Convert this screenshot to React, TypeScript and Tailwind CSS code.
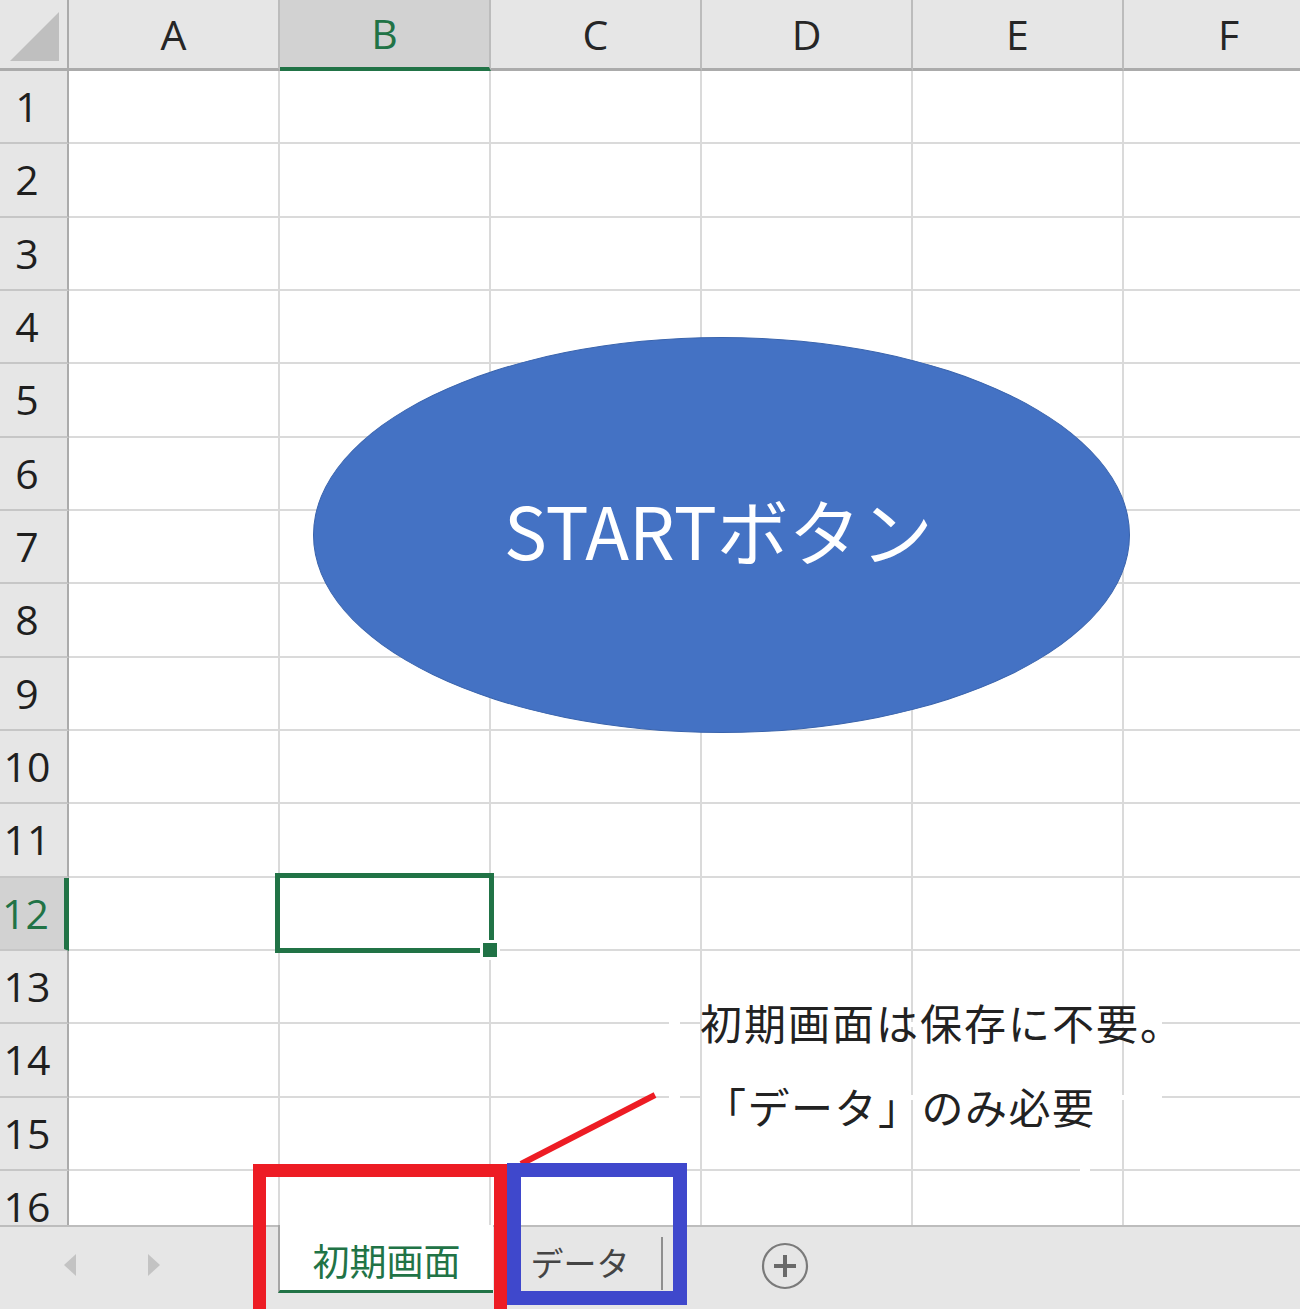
import React from "react";

const COLS = ["A", "B", "C", "D", "E", "F"];
const ROWS = Array.from({ length: 16 }, (_, i) => i + 1);

const SELECTED_COL = "B";
const SELECTED_ROW = 12;

function ColumnHeader({ label }: { label: string }) {
  const active = label === SELECTED_COL;
  return (
    <div
      className={
        active
          ? "w-[211px] shrink-0 flex items-center justify-center bg-[#d2d2d2] border-r-2 border-r-[#bcbcbc] border-b-4 border-b-[#217346] text-[#217346]"
          : "w-[211px] shrink-0 flex items-center justify-center bg-[#e6e6e6] border-r-2 border-r-[#bcbcbc] border-b-[3px] border-b-[#ababab] text-[#262626]"
      }
    >
      <span className="text-[41px] leading-none">{label}</span>
    </div>
  );
}

function SheetRow({ row }: { row: number }) {
  const active = row === SELECTED_ROW;
  return (
    <div className="flex h-[73.33px]">
      <div
        className={
          active
            ? "w-[69px] shrink-0 flex items-center justify-center pr-[13px] bg-[#d2d2d2] border-r-[5px] border-r-[#217346] border-b-2 border-b-[#c6c6c6] text-[#217346]"
            : "w-[69px] shrink-0 flex items-center justify-center pr-[13px] bg-[#e6e6e6] border-r-2 border-r-[#ababab] border-b-2 border-b-[#c6c6c6] text-[#1f1f1f]"
        }
      >
        <span className="text-[41px] leading-none">{row}</span>
      </div>
      {COLS.map((c) => (
        <div key={c} className="w-[211px] shrink-0 bg-white border-r-2 border-b-2 border-[#dadada]" />
      ))}
    </div>
  );
}

function SheetTabs() {
  return (
    <div className="h-[84px] shrink-0 flex bg-[#e6e6e6]">
      {/* scroll arrows */}
      <div className="w-[278px] shrink-0 flex items-start pt-[27px] pl-[64px] gap-[72px] border-t-2 border-[#bdbdbd]">
        <svg width="12" height="22" viewBox="0 0 12 22">
          <path d="M12 0 L0 11 L12 22 Z" fill="#c3c3c3" />
        </svg>
        <svg width="12" height="22" viewBox="0 0 12 22">
          <path d="M0 0 L12 11 L0 22 Z" fill="#c3c3c3" />
        </svg>
      </div>

      {/* active sheet */}
      <div className="w-[215px] h-[68px] shrink-0 flex items-center justify-center pt-[8px] bg-white border-l-2 border-l-[#a6a6a6] border-b-[3px] border-b-[#217346]">
        <span className="text-[37px] leading-none text-[#217346]">初期画面</span>
      </div>

      {/* other sheet */}
      <div className="w-[172px] shrink-0 flex items-start border-t-2 border-[#bdbdbd]">
        <div className="flex-1 h-[70px] flex items-center justify-center pt-[2px] pl-[6px]">
          <span className="text-[33px] leading-none text-[#444444]">データ</span>
        </div>
        <div className="w-[2px] h-[53px] mt-[10px] mr-[2px] bg-[#8e8e8e]" />
      </div>

      {/* new sheet */}
      <div className="flex-1 flex items-start pt-[15px] pl-[96px] border-t-2 border-[#bdbdbd]">
        <svg width="48" height="48" viewBox="0 0 48 48">
          <circle cx="24" cy="24" r="22" fill="none" stroke="#7a7a7a" strokeWidth="2.2" />
          <path d="M24 13 V35 M13 24 H35" stroke="#6a6a6a" strokeWidth="4" />
        </svg>
      </div>
    </div>
  );
}

export default function App() {
  return (
    <div className="relative w-[1300px] h-[1309px] overflow-hidden bg-white font-['Open_Sans','Noto_Sans_CJK_JP',sans-serif]">
      <div className="flex flex-col h-full">
        {/* column headers */}
        <div className="flex h-[71px] shrink-0">
          <div className="w-[69px] shrink-0 relative bg-[#e6e6e6] border-r-2 border-b-[3px] border-[#ababab]">
            <svg className="absolute left-[10px] top-[12px]" width="49" height="49" viewBox="0 0 49 49">
              <path d="M0 49 L49 0 L49 49 Z" fill="#bfbfbf" />
            </svg>
          </div>
          {COLS.map((c) => (
            <ColumnHeader key={c} label={c} />
          ))}
        </div>

        {/* cells */}
        <div className="flex-1 overflow-hidden">
          {ROWS.map((r) => (
            <SheetRow key={r} row={r} />
          ))}
        </div>

        <SheetTabs />
      </div>

      {/* START shape */}
      <div className="absolute left-[313px] top-[337px] w-[817px] h-[396px] rounded-[50%] bg-[#4472c4] border border-[#3a64ad] flex items-center justify-center">
        <span className="text-[72px] leading-none text-white font-['Noto_Sans_CJK_JP',sans-serif] pb-[12px] pr-[6px]">
          STARTボタン
        </span>
      </div>

      {/* selected cell B12 */}
      <div className="absolute left-[275px] top-[873px] w-[219px] h-[80px] border-[5px] border-[#217346]" />
      <div className="absolute left-[480px] top-[940px] w-[20px] h-[20px] border-[3px] border-white bg-[#217346]" />

      {/* note box: hides the horizontal grid lines behind the text */}
      <div className="absolute left-[702px] top-[1022px] w-[460px] h-[5px] bg-white" />
      <div className="absolute left-[702px] top-[1095px] w-[460px] h-[5px] bg-white" />
      <div className="absolute left-[669px] top-[1022px] w-[11px] h-[5px] bg-white" />
      <div className="absolute left-[669px] top-[1095px] w-[11px] h-[5px] bg-white" />
      <div className="absolute left-[1080px] top-[1168px] w-[10px] h-[5px] bg-white" />

      <div className="absolute left-[700px] top-[1001px] text-[42px] leading-none tracking-[2px] text-[#222222] font-['Noto_Sans_CJK_JP',sans-serif] whitespace-nowrap">
        初期画面は保存に不要。
      </div>
      <div className="absolute left-[704px] top-[1085px] text-[42px] leading-none tracking-[1.5px] text-[#222222] font-['Noto_Sans_CJK_JP',sans-serif] whitespace-nowrap">
        「データ」のみ必要
      </div>

      {/* pointer line */}
      <svg className="absolute left-0 top-0 pointer-events-none" width="1300" height="1309">
        <line x1="521" y1="1164" x2="655" y2="1095" stroke="#ed1c24" strokeWidth="6" />
      </svg>

      {/* highlight frames around the sheet tabs */}
      <div className="absolute left-[253px] top-[1164px] w-[254px] h-[160px] border-[13px] border-[#ed1c24]" />
      <div className="absolute left-[507px] top-[1163px] w-[180px] h-[142px] border-[14px] border-[#3f48cc]" />
    </div>
  );
}
